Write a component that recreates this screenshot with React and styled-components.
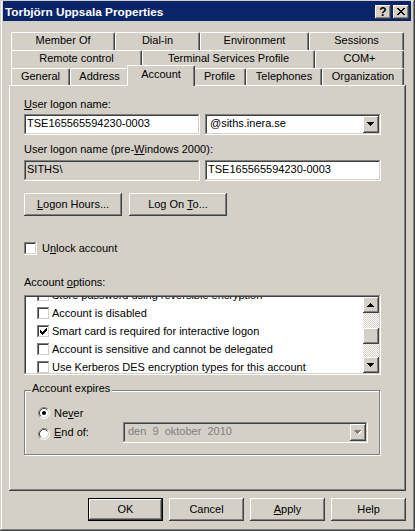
import React from "react";
import styled, { createGlobalStyle, css } from "styled-components";

const GlobalStyle = createGlobalStyle`
  html, body {
    margin: 0;
    padding: 0;
    background: #d4d0c8;
  }
  body {
    font-family: "Liberation Sans", Arial, sans-serif;
    font-size: 11px;
    color: #000;
  }
  * {
    box-sizing: border-box;
  }
`;

const raised = css`
  box-shadow: inset -1px -1px #404040, inset 1px 1px #fff,
    inset -2px -2px #808080, inset 2px 2px #d4d0c8;
`;
const sunken = css`
  box-shadow: inset -1px -1px #fff, inset 1px 1px #808080,
    inset -2px -2px #d4d0c8, inset 2px 2px #404040;
`;

const Window = styled.div`
  width: 415px;
  height: 531px;
  background: #d4d0c8;
  box-shadow: inset -1px -1px #404040, inset 1px 1px #d4d0c8,
    inset -2px -2px #808080, inset 2px 2px #fff;
  padding: 1px 4px 3px 3px;
  display: flex;
  flex-direction: column;
`;

const TitleBar = styled.div`
  height: 20px;
  background: #0a246a;
  display: flex;
  align-items: flex-start;
  justify-content: space-between;
  padding: 0 2px 0 2px;
`;

const Title = styled.div`
  color: #fff;
  font-weight: bold;
  font-size: 11.8px;
  line-height: 20px;
  padding-top: 1px;
  white-space: nowrap;
`;

const CapButtons = styled.div`
  display: flex;
  gap: 2px;
  margin-top: 4px;
`;

const CapButton = styled.div`
  width: 16px;
  height: 14px;
  background: #d4d0c8;
  ${raised};
  display: flex;
  align-items: center;
  justify-content: center;
  font-weight: bold;
  font-size: 12px;
  line-height: 14px;
  padding-bottom: 1px;
`;

const Body = styled.div`
  flex: 1;
  display: flex;
  flex-direction: column;
  padding: 11px 0 0 6px;
`;

const TabStrip = styled.div`
  width: 393px;
  margin-left: 2px;
  display: flex;
  flex-direction: column;
`;

const TabRow = styled.div`
  display: flex;
  height: ${(p) => p.$h}px;
`;

const Tab = styled.div`
  width: ${(p) => p.$w}px;
  flex: none;
  background: #d4d0c8;
  border-left: 1px solid #fff;
  border-top: 1px solid #fff;
  border-right: 1px solid #404040;
  border-top-left-radius: 2px;
  border-top-right-radius: 2px;
  box-shadow: inset -1px 0 #808080;
  text-align: center;
  line-height: 13px;
  padding-top: 1px;
  white-space: nowrap;
  ${(p) =>
    p.$active &&
    css`
      position: relative;
      z-index: 2;
      width: ${p.$w + 4}px;
      margin: -3px -2px -1px;
      padding-top: 2px;
    `}
`;

const Panel = styled.div`
  width: 397px;
  height: 406px;
  background: #d4d0c8;
  box-shadow: inset -1px -1px #404040, inset 1px 1px #fff,
    inset -2px -2px #808080;
  padding: 13px 0 0 15px;
  display: flex;
  flex-direction: column;
`;

const Label = styled.div`
  line-height: 13px;
  height: 13px;
  margin-bottom: ${(p) => p.$mb || 0}px;
  margin-top: ${(p) => p.$mt || 0}px;
  white-space: nowrap;
`;

const FieldRow = styled.div`
  display: flex;
  gap: 5px;
`;

const Field = styled.div`
  width: ${(p) => p.$w}px;
  height: 21px;
  background: ${(p) => (p.$disabled ? "#d4d0c8" : "#fff")};
  ${sunken};
  padding: 3px 3px 0;
  line-height: 13px;
  white-space: nowrap;
  overflow: hidden;
`;

const Combo = styled.div`
  width: ${(p) => p.$w}px;
  height: 21px;
  background: ${(p) => (p.$disabled ? "#d4d0c8" : "#fff")};
  color: ${(p) => (p.$disabled ? "#808080" : "#000")};
  ${sunken};
  padding: 2px;
  display: flex;
`;

const ComboText = styled.div`
  flex: 1;
  padding: 1px 3px 0;
  line-height: 13px;
  white-space: pre;
  overflow: hidden;
`;

const ArrowButton = styled.div`
  width: ${(p) => p.$w || 16}px;
  height: ${(p) => p.$h || 17}px;
  flex: none;
  background: #d4d0c8;
  ${raised};
  display: flex;
  align-items: center;
  justify-content: center;
`;

const ButtonRow = styled.div`
  display: flex;
  gap: ${(p) => p.$gap}px;
  margin-top: ${(p) => p.$mt || 0}px;
  width: ${(p) => (p.$width ? `${p.$width}px` : "auto")};
  justify-content: ${(p) => (p.$end ? "flex-end" : "flex-start")};
`;

const Button = styled.div`
  width: ${(p) => p.$w || 75}px;
  height: 23px;
  background: #d4d0c8;
  ${raised};
  display: flex;
  align-items: center;
  justify-content: center;
  line-height: 13px;
  white-space: nowrap;
  ${(p) =>
    p.$default &&
    css`
      box-shadow: inset 0 0 0 1px #000, inset -2px -2px #404040,
        inset 2px 2px #fff, inset -3px -3px #808080,
        inset 3px 3px #d4d0c8;
    `}
`;

const CheckRow = styled.div`
  display: flex;
  align-items: center;
  gap: 5px;
  margin-top: 26px;
  line-height: 13px;
`;

const Box = styled.span`
  width: 13px;
  height: 13px;
  flex: none;
  background: #fff;
  ${sunken};
  display: inline-flex;
`;

const ListBox = styled.div`
  width: 357px;
  height: 80px;
  background: #fff;
  ${sunken};
  padding: 2px;
  display: flex;
`;

const ListItems = styled.div`
  flex: 1;
  overflow: hidden;
`;

const ListInner = styled.div`
  margin-top: -10px;
`;

const ListRow = styled.div`
  height: 18px;
  display: flex;
  align-items: flex-start;
  gap: 2px;
  padding: 2px 0 0 11px;
  line-height: 13px;
  white-space: nowrap;
`;

const ScrollBar = styled.div`
  width: 16px;
  display: flex;
  flex-direction: column;
`;

const Track = styled.div`
  height: ${(p) => p.$h}px;
  background: repeating-conic-gradient(#fff 0 25%, #d4d0c8 0 50%) 0 0 / 2px
    2px;
`;

const GroupBox = styled.div`
  width: 356px;
  height: 65px;
  margin-top: 15px;
  border: 1px solid #808080;
  box-shadow: inset 1px 1px #fff, 1px 1px #fff;
  padding: 0 0 0 13px;
  display: flex;
  flex-direction: column;
  align-items: flex-start;
`;

const Legend = styled.div`
  margin: -9px 0 0 -7px;
  padding: 0 2px 0 1px;
  background: #d4d0c8;
  line-height: 13px;
`;

const RadioRow = styled.div`
  display: flex;
  align-items: ${(p) => (p.$top ? "flex-start" : "center")};
  margin-top: ${(p) => p.$mt}px;
  height: ${(p) => p.$h}px;
  line-height: 13px;
`;

const RadioLabel = styled.span`
  width: ${(p) => (p.$w ? `${p.$w}px` : "auto")};
  margin-left: 4px;
  margin-top: ${(p) => p.$mt || 0}px;
`;

const RadioIcon = styled.svg`
  flex: none;
  margin-top: ${(p) => p.$mt || 0}px;
`;

const Check = () => (
  <svg width="13" height="13" viewBox="0 0 13 13" shapeRendering="crispEdges">
    <path
      d="M3 5H4V6H5V7H6V6H7V5H8V4H9V3H10V6H9V7H8V8H7V9H6V10H5V9H4V8H3Z"
      fill="#000"
    />
  </svg>
);

const Arrow = ({ up, disabled }) => {
  const d = up
    ? "M3 0h1v1h-1zM2 1h3v1h-3zM1 2h5v1h-5zM0 3h7v1h-7z"
    : "M0 0h7v1h-7zM1 1h5v1h-5zM2 2h3v1h-3zM3 3h1v1h-1z";
  return (
    <svg width="8" height="5" viewBox="0 0 8 5" shapeRendering="crispEdges">
      {disabled && <path d={d} fill="#fff" transform="translate(1 1)" />}
      <path d={d} fill={disabled ? "#808080" : "#000"} />
    </svg>
  );
};

const Radio = ({ checked, mt }) => (
  <RadioIcon $mt={mt} width="12" height="12" viewBox="0 0 12 12">
    <circle cx="6" cy="6" r="5" fill="#fff" />
    <path d="M2.11 9.89A5.5 5.5 0 0 1 9.89 2.11" stroke="#808080" fill="none" />
    <path d="M9.89 2.11A5.5 5.5 0 0 1 2.11 9.89" stroke="#fff" fill="none" />
    <path d="M2.82 9.18A4.5 4.5 0 0 1 9.18 2.82" stroke="#404040" fill="none" />
    <path d="M9.18 2.82A4.5 4.5 0 0 1 2.82 9.18" stroke="#d4d0c8" fill="none" />
    {checked && <circle cx="6" cy="6" r="2" fill="#000" />}
  </RadioIcon>
);

const tabRows = [
  { h: 18, tabs: [["Member Of", 104], ["Dial-in", 85], ["Environment", 109], ["Sessions", 95]] },
  { h: 18, tabs: [["Remote control", 131], ["Terminal Services Profile", 173], ["COM+", 89]] },
  {
    h: 17,
    tabs: [
      ["General", 59],
      ["Address", 59],
      ["Account", 64, true],
      ["Profile", 53],
      ["Telephones", 76],
      ["Organization", 82],
    ],
  },
];

const options = [
  ["Store password using reversible encryption", false],
  ["Account is disabled", false],
  ["Smart card is required for interactive logon", true],
  ["Account is sensitive and cannot be delegated", false],
  ["Use Kerberos DES encryption types for this account", false],
];

export default function App() {
  return (
    <>
      <GlobalStyle />
      <Window>
        <TitleBar>
          <Title>Torbjörn Uppsala Properties</Title>
          <CapButtons>
            <CapButton>?</CapButton>
            <CapButton>
              <svg width="8" height="7" viewBox="0 0 8 7" shapeRendering="crispEdges">
                <path
                  d="M0 0h2v1h-2zM6 0h2v1h-2zM1 1h2v1h-2zM5 1h2v1h-2zM2 2h4v1h-4zM3 3h2v1h-2zM2 4h4v1h-4zM1 5h2v1h-2zM5 5h2v1h-2zM0 6h2v1h-2zM6 6h2v1h-2z"
                  fill="#000"
                />
              </svg>
            </CapButton>
          </CapButtons>
        </TitleBar>
        <Body>
          <TabStrip>
            {tabRows.map((row, i) => (
              <TabRow key={i} $h={row.h}>
                {row.tabs.map(([name, w, active]) => (
                  <Tab key={name} $w={w} $active={active}>
                    {name}
                  </Tab>
                ))}
              </TabRow>
            ))}
          </TabStrip>
          <Panel>
            <Label $mb={3}>
              <u>U</u>ser logon name:
            </Label>
            <FieldRow>
              <Field $w={176}>TSE165565594230-0003</Field>
              <Combo $w={176}>
                <ComboText>@siths.inera.se</ComboText>
                <ArrowButton>
                  <Arrow />
                </ArrowButton>
              </Combo>
            </FieldRow>
            <Label $mt={8} $mb={4}>
              User logon name (pre-<u>W</u>indows 2000):
            </Label>
            <FieldRow>
              <Field $w={176} $disabled>
                SITHS\
              </Field>
              <Field $w={176}>TSE165565594230-0003</Field>
            </FieldRow>
            <ButtonRow $gap={7} $mt={12}>
              <Button $w={98}>
                <span>
                  <u>L</u>ogon Hours...
                </span>
              </Button>
              <Button $w={98}>
                <span>
                  Log On <u>T</u>o...
                </span>
              </Button>
            </ButtonRow>
            <CheckRow>
              <Box />
              <span>
                U<u>n</u>lock account
              </span>
            </CheckRow>
            <Label $mt={21} $mb={6}>
              Account <u>o</u>ptions:
            </Label>
            <ListBox>
              <ListItems>
                <ListInner>
                  {options.map(([text, checked]) => (
                    <ListRow key={text}>
                      <Box>{checked && <Check />}</Box>
                      <span>{text}</span>
                    </ListRow>
                  ))}
                </ListInner>
              </ListItems>
              <ScrollBar>
                <ArrowButton $h={16}>
                  <Arrow up />
                </ArrowButton>
                <Track $h={15} />
                <ArrowButton $h={16} />
                <Track $h={13} />
                <ArrowButton $h={16}>
                  <Arrow />
                </ArrowButton>
              </ScrollBar>
            </ListBox>
            <GroupBox>
              <Legend>Account expires</Legend>
              <RadioRow $mt={12} $h={12}>
                <Radio checked />
                <RadioLabel>
                  Ne<u>v</u>er
                </RadioLabel>
              </RadioRow>
              <RadioRow $mt={3} $h={21} $top>
                <Radio mt={6} />
                <RadioLabel $w={69} $mt={4}>
                  <u>E</u>nd of:
                </RadioLabel>
                <Combo $w={245} $disabled>
                  <ComboText>{"den  9  oktober  2010"}</ComboText>
                  <ArrowButton>
                    <Arrow disabled />
                  </ArrowButton>
                </Combo>
              </RadioRow>
            </GroupBox>
          </Panel>
          <ButtonRow $gap={6} $mt={7} $width={397} $end>
            <Button $default>OK</Button>
            <Button>Cancel</Button>
            <Button>
              <span>
                <u>A</u>pply
              </span>
            </Button>
            <Button>Help</Button>
          </ButtonRow>
        </Body>
      </Window>
    </>
  );
}
